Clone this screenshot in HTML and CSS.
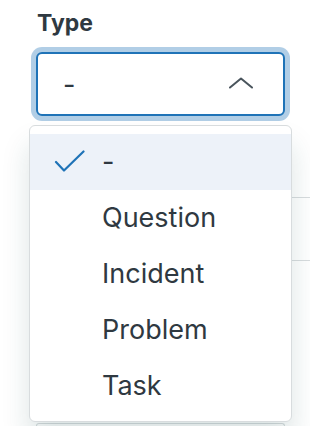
FILE: index.html
```html
<!DOCTYPE html>
<html lang="en">
<head>
<meta charset="utf-8">
<title>Type</title>
<link rel="stylesheet" href="styles.css">
</head>
<body>
<div class="field">
  <label class="label">Type</label>
  <div class="select-wrap">
    <div class="select">
      <span class="value">-</span>
      <svg class="chevron" width="24" height="12" viewBox="0 0 24 12" aria-hidden="true"><path d="M1 10.5 L12 1.5 L23 10.5" fill="none" stroke="#49545c" stroke-width="2" stroke-linecap="round" stroke-linejoin="round"/></svg>
    </div>
    <ul class="menu">
      <li class="item selected">
        <svg class="check" width="32" height="24" viewBox="0 0 32 24" aria-hidden="true"><path d="M2 12 L10 20.5 L29.5 1.5" fill="none" stroke="#1f73b7" stroke-width="2.2" stroke-linecap="round" stroke-linejoin="round"/></svg>
        <span>-</span>
      </li>
      <li class="item"><span>Question</span></li>
      <li class="item"><span>Incident</span></li>
      <li class="item"><span>Problem</span></li>
      <li class="item"><span>Task</span></li>
    </ul>
  </div>
  <div class="bg">
    <div class="bg-row r1"></div>
    <div class="bg-row r2"></div>
    <div class="bg-box"></div>
  </div>
</div>
</body>
</html>
```
FILE: styles.css
```css
html, body {
  margin: 0;
  padding: 0;
  overflow: hidden;
  background: #fff;
}
body {
  font-family: Inter, "Noto Sans", sans-serif;
  color: #2f3941;
}
.field {
  padding: 9px 0 0 36px;
}
.label {
  display: block;
  font-size: 23px;
  line-height: 29px;
  font-weight: 700;
  padding-left: 1px;
}
.select-wrap {
  position: relative;
  width: 249px;
  margin-top: 14px;
}
.select {
  box-sizing: border-box;
  height: 64px;
  border: 2px solid #1f73b7;
  border-radius: 6px;
  box-shadow: 0 0 0 5px rgba(31, 115, 183, 0.35);
  display: flex;
  align-items: center;
  justify-content: space-between;
  padding: 0 30px 0 25px;
  font-size: 27px;
  background: #fff;
}
.chevron {
  display: block;
  margin-top: -2px;
}
.menu {
  position: absolute;
  z-index: 2;
  left: -7px;
  top: 73px;
  width: 263px;
  box-sizing: border-box;
  margin: 0;
  padding: 8px 0 7px;
  list-style: none;
  background: #fff;
  border: 1px solid #d8dcde;
  border-radius: 6px;
  box-shadow: 0 20px 28px 0 rgba(23, 73, 77, 0.15);
}
.item {
  position: relative;
  height: 56px;
  line-height: 56px;
  font-size: 27px;
  padding-left: 72px;
}
.item.selected {
  background: #edf2f9;
}
.check {
  position: absolute;
  left: 24px;
  top: 16px;
}
.bg {
  width: 274px;
}
.bg-row {
  border-bottom: 1px solid #d8dcde;
}
.r1 {
  height: 81px;
}
.r2 {
  height: 62px;
}
.bg-box {
  width: 249px;
  box-sizing: border-box;
  margin-top: 162px;
  height: 3px;
  border: 1px solid #d8dcde;
  border-bottom: 0;
  border-radius: 4px 4px 0 0;
}
```
